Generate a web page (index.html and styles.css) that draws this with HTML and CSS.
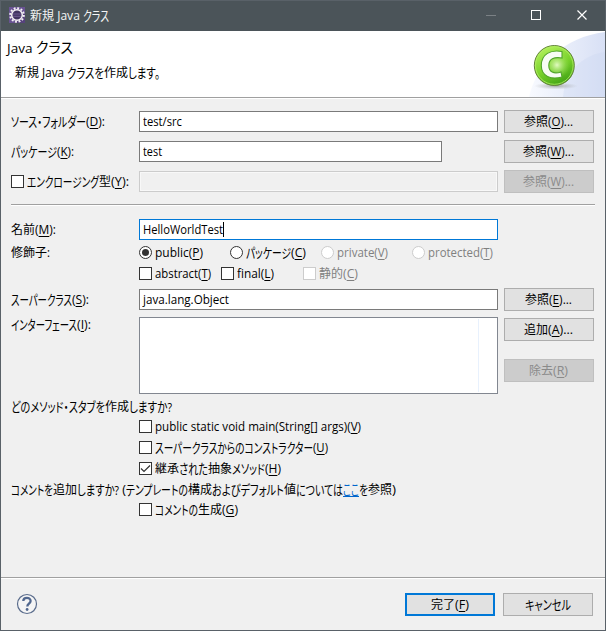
FILE: index.html
```html
<!DOCTYPE html>
<html lang="ja">
<head>
<meta charset="utf-8">
<title>新規 Java クラス</title>
<link rel="stylesheet" href="styles.css">
</head>
<body>
<div class="dialog">
  <header class="titlebar">
    <svg class="gear" width="16" height="16" viewBox="0 0 16 16"><rect width="16" height="16" fill="#56427c"/><path d="M0 0h16v5L5 16H0z" fill="#695393"/><circle cx="8" cy="8" r="6.8" fill="none" stroke="#f3f0f4" stroke-width="2" stroke-dasharray="1.9 1.66"/><circle cx="8" cy="8" r="5.3" fill="#413360" stroke="#f3f0f4" stroke-width="1.5"/><path d="M4 7h8M4 9.3h8" stroke="#6d5a91"/></svg>
    <span class="caption"><span data-w="24">新規</span><span data-w="29" class="sp">&nbsp;Java&nbsp;</span><span data-w="26">クラス</span></span>
    <svg class="controls" width="120" height="16" viewBox="0 0 120 16"><path d="M8 8.5h10" stroke="#7b8185"/><rect x="53.5" y="3.5" width="9" height="9" fill="none" stroke="#fff"/><path d="M99.5 3.5l9 9m0-9l-9 9" stroke="#fff" stroke-width="1.2"/></svg>
  </header>
  <section class="banner">
    <div class="banner-text">
      <h1><span data-w="29">Java&nbsp;</span><span data-w="37">クラス</span></h1>
      <p><span data-w="24">新規</span><span data-w="28">&nbsp;Java&nbsp;</span><span data-w="37">クラスを</span><span data-w="24">作成</span><span data-w="32">します。</span></p>
    </div>
    <svg class="art" width="77" height="66" viewBox="0 0 77 66">
      <defs>
        <linearGradient id="sky"><stop offset="0" stop-color="#f8faff"/><stop offset="1" stop-color="#d8e0f5"/></linearGradient>
        <linearGradient id="ball" x1=".2" y1="0" x2=".7" y2="1"><stop offset="0" stop-color="#b8f35e"/><stop offset=".55" stop-color="#78d12b"/><stop offset="1" stop-color="#3d9f13"/></linearGradient>
        <radialGradient id="shine"><stop offset="0" stop-color="#e2fac2"/><stop offset="1" stop-color="#94df4c" stop-opacity="0"/></radialGradient>
        <radialGradient id="shade"><stop offset="0" stop-color="#858c83" stop-opacity=".7"/><stop offset="1" stop-color="#aaa" stop-opacity="0"/></radialGradient>
      </defs>
      <path d="M1 66C8 34 36 6 77 1v65z" fill="url(#sky)"/><path d="M35 66C37 42 53 24 77 21v45z" fill="#cbd7f2" opacity=".35"/>
      <ellipse cx="28" cy="55" rx="22" ry="3.5" fill="url(#shade)"/>
      <circle cx="26.3" cy="34.5" r="20" fill="url(#ball)" stroke="#63823b"/>
      <circle cx="26.3" cy="34.5" r="18.8" fill="none" stroke="#b2ed67" opacity=".8"/>
      <circle cx="29" cy="34" r="13" fill="url(#shine)"/>
      <path d="M34 20.5v6.5c-8-1.3-13.2 1-13.2 7.5 0 6.5 5 8.8 12.2 6.5l1 5c-11 3.2-20.7-.8-20.7-11.5 0-11.5 9.5-16.2 20.7-14z" fill="#f8fcf4" stroke="#51a52a" stroke-width="1.1"/>
    </svg>
  </section>

  <main class="form">
    <div class="row">
      <label class="label"><span data-w="75">ソース・フォルダー</span><span data-w="19">(<u>D</u>):</span></label>
      <div class="input"><span data-w="39">test/src</span></div>
      <button><span data-w="24">参照</span><span data-w="25">(<u>O</u>)...</span></button>
    </div>
    <div class="row">
      <label class="label"><span data-w="46">パッケージ</span><span data-w="17">(<u>K</u>):</span></label>
      <div class="input short"><span data-w="19">test</span></div>
      <button class="end"><span data-w="24">参照</span><span data-w="27">(<u>W</u>)...</span></button>
    </div>
    <div class="row">
      <label class="label option"><i class="check"></i><span data-w="72">エンクロージング</span><span data-w="12">型</span><span data-w="18">(<u>Y</u>):</span></label>
      <div class="input off"></div>
      <button class="disabled"><span data-w="24">参照</span><span data-w="27">(<u>W</u>)...</span></button>
    </div>
    <hr>
    <div class="row">
      <label class="label"><span data-w="24">名前</span><span data-w="21">(<u>M</u>):</span></label>
      <div class="input focus"><span data-w="80">HelloWorldTest</span><i class="caret"></i></div>
    </div>
    <div class="row modifiers">
      <span class="label"><span data-w="36">修飾子</span><span data-w="3">:</span></span>
      <div class="radios">
        <label class="option"><i class="radio on"></i><span data-w="48">public(<u>P</u>)</span></label>
        <label class="option"><i class="radio"></i><span data-w="45">パッケージ</span><span data-w="15">(<u>C</u>)</span></label>
        <label class="option dim"><i class="radio"></i><span data-w="51">private(<u>V</u>)</span></label>
        <label class="option dim"><i class="radio"></i><span data-w="65">protected(<u>T</u>)</span></label>
      </div>
    </div>
    <div class="row modifiers second">
      <span class="label"></span>
      <div class="checks">
        <label class="option"><i class="check"></i><span data-w="56">abstract(<u>T</u>)</span></label>
        <label class="option"><i class="check"></i><span data-w="37">final(<u>L</u>)</span></label>
        <label class="option dim"><i class="check"></i><span data-w="24">静的</span><span data-w="15">(<u>C</u>)</span></label>
      </div>
    </div>
    <div class="row super">
      <label class="label"><span data-w="61">スーパークラス</span><span data-w="17">(<u>S</u>):</span></label>
      <div class="input"><span data-w="86">java.lang.Object</span></div>
      <button><span data-w="24">参照</span><span data-w="23">(<u>E</u>)...</span></button>
    </div>
    <div class="row interfaces">
      <label class="label"><span data-w="66">インターフェース</span><span data-w="14">(<u>I</u>):</span></label>
      <div class="list"></div>
      <div class="stack">
        <button><span data-w="24">追加</span><span data-w="25">(<u>A</u>)...</span></button>
        <button class="disabled"><span data-w="24">除去</span><span data-w="15">(<u>R</u>)</span></button>
      </div>
    </div>
    <p class="question"><span data-w="94">どのメソッド・スタブを</span><span data-w="24">作成</span><span data-w="43">しますか?</span></p>
    <div class="stubs">
      <label class="option"><i class="check"></i><span data-w="206">public static void main(String[] args)(<u>V</u>)</span></label>
      <label class="option"><i class="check"></i><span data-w="158">スーパークラスからのコンストラクター</span><span data-w="15">(<u>U</u>)</span></label>
      <label class="option"><i class="check"><svg width="11" height="11" viewBox="0 0 11 11"><path d="M1 5.5l3 3 6-6" fill="none" stroke="#333" stroke-width="1.2"/></svg></i><span data-w="24">継承</span><span data-w="29">された</span><span data-w="24">抽象</span><span data-w="33">メソッド</span><span data-w="16">(<u>H</u>)</span></label>
    </div>
    <p class="question"><span data-w="42">コメントを</span><span data-w="24">追加</span><span data-w="42">しますか?</span><span data-w="7">&nbsp;(</span><span data-w="62">テンプレートの</span><span data-w="24">構成</span><span data-w="72">およびデフォルト</span><span data-w="12">値</span><span data-w="47">については</span><a><span data-w="16">ここ</span></a><span data-w="9">を</span><span data-w="24">参照</span><span data-w="4">)</span></p>
    <div class="stubs">
      <label class="option"><i class="check"></i><span data-w="43">コメントの</span><span data-w="24">生成</span><span data-w="16">(<u>G</u>)</span></label>
    </div>
  </main>

  <footer>
    <svg width="22" height="22" viewBox="0 0 22 22"><circle cx="11" cy="11" r="9.5" fill="#f5f5f5" stroke="#5a6c8c" stroke-width="1.2"/><path d="M7.3 8.1C7.3 3.8 14.6 3.9 14.6 7.9c0 2.6-3.3 2.9-3.3 5.6" fill="none" stroke="#52688f" stroke-width="2.3"/><circle cx="11.1" cy="16.5" r="1.4" fill="#52688f"/></svg>
    <div class="actions">
      <button class="primary"><span data-w="24">完了</span><span data-w="14">(<u>F</u>)</span></button>
      <button><span data-w="46">キャンセル</span></button>
    </div>
  </footer>
</div>
<script src="fit.js"></script>
</body>
</html>
```
FILE: styles.css
```css
* { box-sizing: border-box; }
body { margin: 0; overflow: hidden; font: 12px/14px "Open Sans", "Noto Sans CJK JP", sans-serif; color: #000; }
.dialog { width: 606px; height: 631px; border: 1px solid #596168; background: #f0f0f0; display: flex; flex-direction: column; }
[data-w] { display: inline-block; flex: none; white-space: nowrap; transform-origin: 0 50%; }
.kana { font-size: 1.1em; font-feature-settings: "palt"; }
u { text-decoration: underline; text-underline-offset: 2px; text-decoration-thickness: 1px; text-decoration-skip-ink: none; }
.titlebar { height: 30px; background: #4b5459; display: flex; align-items: center; padding: 0 7px 2px 8px; color: #f4f4f4; flex: none; }
.caption { display: flex; margin: 2px auto 0 5px; }
.banner { height: 67px; flex: none; background: #fff; border-bottom: 1px solid #a0a0a0; display: flex; justify-content: space-between; }
.banner-text { padding: 9px 0 0 6px; }
h1 { margin: 0; font-size: 13px; line-height: 16px; font-weight: 400; display: flex; }
.banner p { margin: 10px 0 0 8px; display: flex; }
.form { flex: 1; padding: 11px 10px 0; border-top: 1px solid #fff; display: flex; flex-direction: column; }
.row { display: flex; align-items: center; height: 23px; margin-bottom: 7px; flex: none; }
.label { width: 128px; display: flex; align-items: center; flex: none; }
.input { width: 359px; height: 21px; padding: 0 3px; border: 1px solid #7a7a7a; background: #fff; display: flex; align-items: center; }
.short { width: 303px; }
.off { border-color: #ccc; background: #f0f0f0; box-shadow: inset 0 0 0 1px #f8f8f8; }
.focus { border-color: #0078d7; }
.caret { width: 1px; height: 15px; background: #000; }
button { width: 90px; height: 23px; padding: 0 1px 0 0; margin: 0 0 0 6px; display: flex; align-items: center; justify-content: center; border: 1px solid #adadad; background: #e1e1e1; color: #000; font: inherit; flex: none; }
.end { margin-left: auto; margin-right: 1px; }
.disabled { background: #ccc; border-color: #bfbfbf; color: #8a8a8a; }
hr { width: 584px; height: 2px; margin: 4px 0 12px; border: 0; border-top: 1px solid #a0a0a0; background: #fff; flex: none; }
.option { display: flex; align-items: center; }
.check { width: 13px; height: 13px; border: 1px solid #333; background: #fff; margin: 0 3px 1px 0; flex: none; display: flex; }
.radio { width: 13px; height: 13px; border: 1px solid #333; border-radius: 50%; background: #fff; margin: 0 3px 1px 0; flex: none; display: grid; place-items: center; }
.on::after { content: ""; width: 7px; height: 7px; border-radius: 50%; background: #333; }
.dim { color: #808080; }
.dim i { border-color: #ccc; }
.modifiers { height: 14px; margin: -2px 0 7px; }
.second { margin-top: 0; }
.radios { display: grid; grid-template-columns: 91px 91px 91px 91px; }
.checks { display: grid; grid-template-columns: 82px 82px 82px; }
.super { margin-bottom: 6px; }
.interfaces { height: 77px; align-items: flex-start; margin-bottom: 6px; }
.interfaces .label { padding-top: 1px; }
.list { width: 359px; height: 77px; border: 1px solid #828790; background: #fff; padding: 1px 18px 1px 0; }
.list::after { content: ""; display: block; height: 73px; border-right: 1px solid #e8f1fd; }
.stack { display: flex; flex-direction: column; gap: 18px; padding-top: 1px; }
.question { display: flex; margin: 0; height: 14px; flex: none; }
.question a { color: #0066cc; height: 14px; border-bottom: 1px solid #0066cc; }
.stubs { padding: 6px 0 7px 128px; display: grid; gap: 7px; }
.stubs .option { height: 14px; }
footer { height: 53px; border-top: 1px solid #a0a0a0; box-shadow: inset 0 1px #fff; display: flex; justify-content: space-between; padding: 15px 12px 0 15px; flex: none; }
.actions { display: flex; gap: 2px; }
.primary { border: 2px solid #0078d7; }
```
FILE: fit.js
```javascript
// Condense or expand each run of text to its set advance width.
document.querySelectorAll("[data-w]").forEach(function (run) {
  if (/^[\u3040-\u30ff]/.test(run.textContent)) run.classList.add("kana");
  var natural = run.getBoundingClientRect().width;
  var width = Number(run.dataset.w);
  run.style.transform = "scaleX(" + width / natural + ")";
  run.style.marginRight = width - natural + "px";
});
```
